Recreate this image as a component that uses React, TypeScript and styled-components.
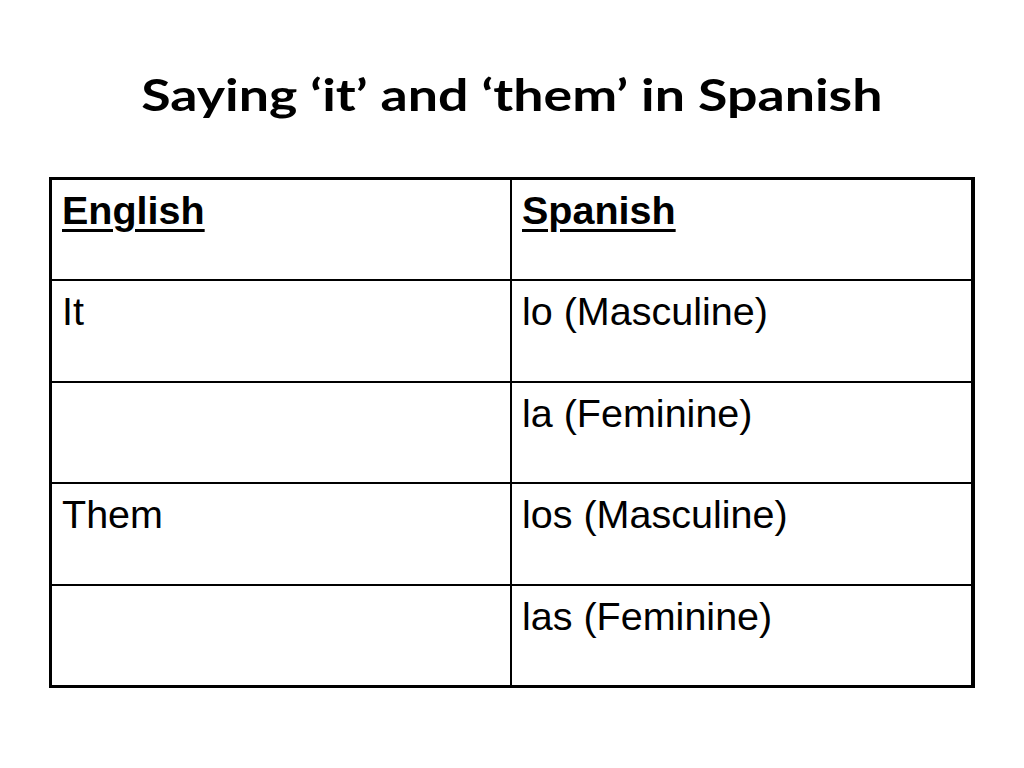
import React from "react";
import styled, { createGlobalStyle } from "styled-components";

const GlobalStyle = createGlobalStyle`
  html, body {
    margin: 0;
    padding: 0;
    background: #ffffff;
  }
  body {
    width: 1024px;
    height: 768px;
    overflow: hidden;
  }
`;

const Slide = styled.div`
  width: 1024px;
  height: 768px;
  display: flex;
  flex-direction: column;
  align-items: center;
  background: #fff;
`;

const Title = styled.h1`
  margin: 69px 0 0;
  font-family: "Lato", "Open Sans", sans-serif;
  font-weight: 700;
  font-size: 44px;
  line-height: 50px;
  color: #000;
  white-space: nowrap;
  transform: scaleX(1.22);
  transform-origin: center;
`;

const Table = styled.div`
  margin-top: 58px;
  width: 926px;
  box-sizing: border-box;
  display: grid;
  grid-template-columns: 458px 459px;
  grid-auto-rows: 99.4px;
  gap: 2px;
  padding: 3px;
  background: #000;
`;

const Cell = styled.div<{ $head?: boolean }>`
  background: #fff;
  padding: 8px 10px 0;
  font-family: "Liberation Sans", Arial, sans-serif;
  font-size: 39.5px;
  font-weight: ${(p) => (p.$head ? 700 : 400)};
  text-decoration: ${(p) => (p.$head ? "underline" : "none")};
  text-decoration-thickness: 3px;
  text-underline-offset: 5px;
  color: #000;
`;

const rows: [string, string][] = [
  ["It", "lo (Masculine)"],
  ["", "la (Feminine)"],
  ["Them", "los (Masculine)"],
  ["", "las (Feminine)"],
];

export default function App() {
  return (
    <Slide>
      <GlobalStyle />
      <Title>Saying ‘it’ and ‘them’ in Spanish</Title>
      <Table>
        <Cell $head>English</Cell>
        <Cell $head>Spanish</Cell>
        {rows.map(([en, es], i) => (
          <React.Fragment key={i}>
            <Cell>{en}</Cell>
            <Cell>{es}</Cell>
          </React.Fragment>
        ))}
      </Table>
    </Slide>
  );
}
